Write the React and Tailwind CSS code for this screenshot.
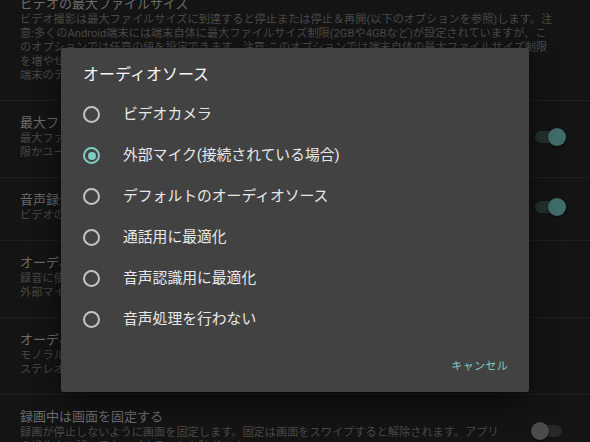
import React from "react";

const FONT = { fontFamily: 'Roboto, "Noto Sans CJK JP", "Noto Sans", sans-serif' };

function Toggle({ on }) {
  return (
    <div className="relative w-[35px] h-[18px] shrink-0">
      <div
        className={
          "absolute left-[4px] right-[4px] top-[3px] h-[12px] rounded-full " +
          (on ? "bg-[#25312f]" : "bg-[#282828]")
        }
      />
      <div
        className={
          "absolute top-0 w-[18px] h-[18px] rounded-full shadow-[0_1px_3px_rgba(0,0,0,0.6)] " +
          (on ? "left-[17px] bg-[#3f6d69]" : "left-0 bg-[#4b4b4b]")
        }
      />
    </div>
  );
}

function Section({ title, lines, toggle }) {
  return (
    <div className="flex items-center pl-5 pr-[24px] pt-[13px] pb-[17px] border-b border-[#1f1f1f]">
      <div className="flex-1 min-w-0">
        <div className="text-[13px] leading-[18px] text-[#6c6c6c] whitespace-nowrap">{title}</div>
        {lines.map((l, i) => (
          <div key={i} className="text-[11.2px] leading-[14px] text-[#484848] whitespace-nowrap overflow-hidden">
            {l}
          </div>
        ))}
      </div>
      {toggle !== undefined && <Toggle on={toggle} />}
    </div>
  );
}

function Radio({ checked }) {
  return (
    <div
      className={
        "w-[17px] h-[17px] rounded-full border-2 flex items-center justify-center shrink-0 " +
        (checked ? "border-[#80cbc4]" : "border-[#c4c4c4]")
      }
    >
      {checked && <div className="w-[8px] h-[8px] rounded-full bg-[#80cbc4]" />}
    </div>
  );
}

export default function App() {
  const options = [
    "ビデオカメラ",
    "外部マイク(接続されている場合)",
    "デフォルトのオーディオソース",
    "通話用に最適化",
    "音声認識用に最適化",
    "音声処理を行わない",
  ];
  return (
    <div style={FONT} className="relative w-[590px] h-[442px] overflow-hidden bg-[#141414]">
      <div className="-mt-[18px]">
        <Section
          title="ビデオの最大ファイルサイズ"
          lines={[
            "ビデオ撮影は最大ファイルサイズに到達すると停止または停止＆再開(以下のオプションを参照)します。注",
            "意:多くのAndroid端末には端末自体に最大ファイルサイズ制限(2GBや4GBなど)が設定されていますが、こ",
            "のオプションでは任意の値を設定できます。注意:このオプションでは端末自体の最大ファイルサイズ制限",
            "を増やせません。",
            "端末のデフォルト値を使用するには0を設定してください。",
          ]}
        />
        <Section
          title="最大ファイルサイズで再開"
          lines={[
            "最大ファイルサイズに達したら自動的に新しいファイルで録画を再開します(端末の制",
            "限かユーザー設定の最大ファイルサイズ)。",
          ]}
          toggle={true}
        />
        <Section title="音声録音" lines={["ビデオの録画時に音声を録音します。"]} toggle={true} />
        <Section
          title="オーディオソース"
          lines={["録音に使用するオーディオソースを選択します。", "外部マイク(接続されている場合)"]}
        />
        <Section
          title="オーディオチャンネル"
          lines={["モノラルまたはステレオで録音します。", "ステレオは一部の端末でのみ対応しています。"]}
        />
        <Section
          title="録画中は画面を固定する"
          lines={[
            "録画が停止しないように画面を固定します。固定は画面をスワイプすると解除されます。アプリ",
            "の操作中に誤ってタップすることを防ぎます。",
          ]}
          toggle={false}
        />
      </div>

      <div className="absolute left-[61px] top-[48px] w-[468px] bg-[#424242] rounded-[2px] shadow-[0_10px_28px_rgba(0,0,0,0.55)]">
        <div className="pl-[22px] pt-[16px] text-[16px] leading-[22px] text-[#f7f7f7]">オーディオソース</div>
        <div className="mt-[8px] flex flex-col">
          {options.map((o, i) => (
            <div key={i} className="h-[41px] flex items-center pl-[22px] gap-[23px]">
              <Radio checked={i === 1} />
              <span className="text-[14.8px] text-[#e8e8e8] whitespace-nowrap">{o}</span>
            </div>
          ))}
        </div>
        <div className="mt-[9px] pb-[7px] pr-[13px] flex justify-end">
          <div className="h-[36px] px-2 flex items-center text-[11px] tracking-[0.03em] text-[#80cbc4]">
            キャンセル
          </div>
        </div>
      </div>
    </div>
  );
}
